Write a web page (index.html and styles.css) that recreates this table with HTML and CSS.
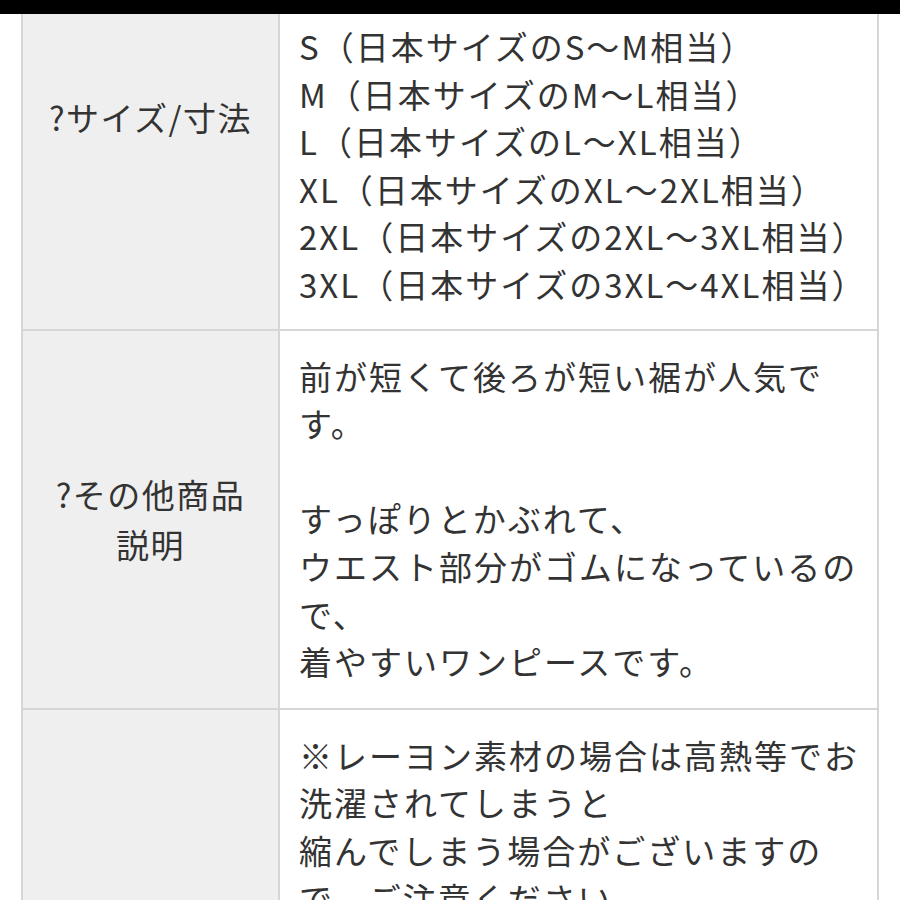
FILE: index.html
```html
<!DOCTYPE html>
<html lang="ja">
<head>
<meta charset="utf-8">
<title>商品詳細</title>
<link rel="stylesheet" href="styles.css">
</head>
<body>
<div class="topbar"></div>
<div class="sheet">
  <table class="spec">
    <tr>
      <th class="label">?サイズ/寸法</th>
      <td class="value first">
        S（日本サイズのS〜M相当）<br>
        M（日本サイズのM〜L相当）<br>
        L（日本サイズのL〜XL相当）<br>
        XL（日本サイズのXL〜2XL相当）<br>
        2XL（日本サイズの2XL〜3XL相当）<br>
        3XL（日本サイズの3XL〜4XL相当）
      </td>
    </tr>
    <tr>
      <th class="label">?その他商品<br>説明</th>
      <td class="value">
        前が短くて後ろが短い裾が人気で<br>
        す。<br>
        <br>
        すっぽりとかぶれて、<br>
        ウエスト部分がゴムになっているの<br>
        で、<br>
        着やすいワンピースです。
      </td>
    </tr>
    <tr>
      <th class="label"></th>
      <td class="value">
        ※レーヨン素材の場合は高熱等でお<br>
        洗濯されてしまうと<br>
        縮んでしまう場合がございますの<br>
        で、ご注意ください。
      </td>
    </tr>
  </table>
</div>
</body>
</html>
```
FILE: styles.css
```css
html, body {
  margin: 0;
  padding: 0;
  background: #ffffff;
}
body {
  font-family: "Noto Sans CJK JP", "Noto Sans", sans-serif;
  color: #333333;
  overflow: hidden;
}
.topbar {
  position: fixed;
  top: 0;
  left: 0;
  right: 0;
  height: 14px;
  background: #000;
  z-index: 2;
}
.sheet {
  margin-top: -96px;
  padding-left: 21px;
}
.spec {
  border-collapse: collapse;
  width: 858px;
  table-layout: fixed;
}
.spec th, .spec td {
  border: 2px solid #d6d6d6;
}
.label {
  width: 243px;
  background: #efefef;
  font-weight: normal;
  font-size: 33px;
  line-height: 50px;
  letter-spacing: 1.5px;
  text-align: center;
  vertical-align: middle;
  padding: 0 6px;
}
.value {
  background: #fff;
  font-size: 33px;
  line-height: 47.6px;
  letter-spacing: 2px;
  padding: 22px 10px 22px 19px;
  vertical-align: top;
  white-space: nowrap;
}
.value.first {
  padding-top: 117px;
  padding-bottom: 20px;
}
```
